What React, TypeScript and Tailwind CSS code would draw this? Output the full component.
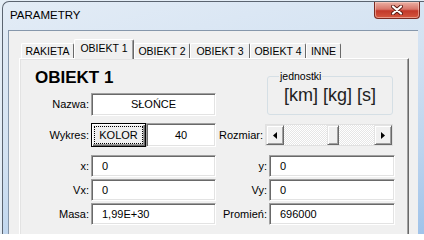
const sunken =
  'bg-white border border-t-[#a0a0a0] border-l-[#a0a0a0] border-r-white border-b-white shadow-[inset_1px_1px_0_#696969,inset_-1px_-1px_0_#e3e3e3]';
const raised =
  'bg-[#f0f0f0] border border-t-[#e3e3e3] border-l-[#e3e3e3] border-r-[#696969] border-b-[#696969] shadow-[inset_1px_1px_0_#ffffff,inset_-1px_-1px_0_#a0a0a0]';

const tabs = [
  { label: 'RAKIETA', w: 'w-[53px]' },
  { label: 'OBIEKT 1', w: 'w-[60px]', active: true },
  { label: 'OBIEKT 2', w: 'w-[56px]' },
  { label: 'OBIEKT 3', w: 'w-[60px]' },
  { label: 'OBIEKT 4', w: 'w-[56px]' },
  { label: 'INNE', w: 'w-[35px]' },
];

function Field({ value, center }: { value: string; center?: boolean }) {
  return (
    <div className={`${sunken} h-full flex items-center ${center ? 'justify-center' : 'pl-[10px]'}`}>
      {value}
    </div>
  );
}

function Row({ label, value, rlabel, rvalue }: { label: string; value: string; rlabel: string; rvalue: string }) {
  return (
    <div className="flex items-center h-[22px] mt-[2px]">
      <span className="w-[69px] text-right">{label}</span>
      <div className="ml-[2px] w-[125px] h-full">
        <Field value={value} />
      </div>
      <span className="ml-[1px] w-[50px] text-right">{rlabel}</span>
      <div className="ml-[2px] w-[126px] h-full">
        <Field value={rvalue} />
      </div>
    </div>
  );
}

function Arrow({ dir }: { dir: 'left' | 'right' }) {
  return (
    <div className={`${raised} w-[18px] h-full flex items-center justify-center`}>
      <svg width="4" height="7" viewBox="0 0 4 7">
        {dir === 'left' ? <polygon points="4,0 4,7 0,3.5" fill="#000" /> : <polygon points="0,0 0,7 4,3.5" fill="#000" />}
      </svg>
    </div>
  );
}

export default function App() {
  return (
    <div className="w-[424px] h-[234px] overflow-hidden bg-[#e4edf6] flex flex-col font-['Liberation_Sans',Arial,sans-serif] text-[11px] text-black">
      <div className="mt-[1px] ml-[2px] flex-1 min-h-0 flex flex-col border-l border-t border-[#5b6470] rounded-tl-[7px] bg-[linear-gradient(165deg,#e3ecf6_0%,#d3e2f2_45%,#bcd4ee_75%,#9fc3ea_100%)]">
        <div className="h-[28px] flex items-start">
          <span className="pl-[7px] pt-[6px] text-[11.5px] leading-[14px]">PARAMETRY</span>
          <div className="ml-auto mr-[4px] w-[46px] h-[17px] rounded-b-[4px] border border-t-0 border-[#7a2a22] bg-[linear-gradient(#ebb0a4_0%,#d8766a_45%,#c2382a_55%,#d4573f_100%)] shadow-[inset_0_0_0_1px_rgba(255,220,210,0.5)] flex items-center justify-center">
            <svg width="12" height="10" viewBox="0 0 12 10">
              <path d="M2 1.5 L10 8.5 M10 1.5 L2 8.5" stroke="#5a1a12" strokeWidth="4" strokeLinecap="round" />
              <path d="M2 1.5 L10 8.5 M10 1.5 L2 8.5" stroke="#ffffff" strokeWidth="2.2" strokeLinecap="round" />
            </svg>
          </div>
        </div>
        <div className="ml-[5px] w-[410px] flex-1 min-h-0 flex flex-col bg-[#f0f0f0] border-l border-t border-[#8697ab]">
          <div className="pt-[8px] pl-[12px] flex items-end">
            {tabs.map((t) =>
              t.active ? (
                <div
                  key={t.label}
                  className={`${t.w} h-[20px] -mb-px relative z-10 bg-[#f0f0f0] border-l border-t border-r border-l-white border-t-white border-r-[#696969] shadow-[inset_-1px_0_0_#a0a0a0] rounded-t-[2px] flex justify-center pt-[2px] text-[10.5px] leading-[13px]`}
                >
                  {t.label}
                </div>
              ) : (
                <div
                  key={t.label}
                  className={`${t.w} h-[15px] border-l border-t border-r border-l-white border-t-white border-r-[#696969] rounded-t-[2px] flex items-center justify-center text-[10.5px] leading-[13px]`}
                >
                  {t.label}
                </div>
              )
            )}
          </div>
          <div className="ml-[10px] w-[390px] flex-1 border border-b-0 border-t-white border-l-white border-r-[#696969] shadow-[inset_-1px_0_0_#a0a0a0,inset_1px_1px_0_#e3e3e3]">
            <div className="flex">
              <div className="w-[197px]">
                <div className="mt-[9px] pl-[15px] h-[20px] text-[17px] leading-[20px] font-bold">OBIEKT 1</div>
                <div className="mt-[5px] flex items-center h-[23px]">
                  <span className="w-[69px] text-right">Nazwa:</span>
                  <div className="ml-[2px] w-[125px] h-full">
                    <Field value="SŁOŃCE" center />
                  </div>
                </div>
              </div>
              <fieldset className="ml-[50px] mt-[11px] w-[126px] h-[45px] border border-[#d5dfe5] rounded-[3px]">
                <legend className="ml-[11px] px-[1px] text-[10.5px] leading-[12px]">jednostki</legend>
                <div className="mt-[3px] text-center text-[18px] leading-[20px] text-[#222]">[km] [kg] [s]</div>
              </fieldset>
            </div>
            <div className="mt-[7px] flex items-center h-[24px]">
              <span className="w-[69px] text-right">Wykres:</span>
              <div className="ml-[2px] w-[125px] h-full flex">
                <div className="w-[55px] h-full flex border border-black bg-[#f0f0f0] shadow-[inset_1px_1px_0_#ffffff,inset_-1px_-1px_0_#696969,inset_-2px_-2px_0_#a0a0a0]">
                  <div className="m-[2px] flex-1 border border-dotted border-black flex items-center justify-center">KOLOR</div>
                </div>
                <div className="flex-1 h-full">
                  <Field value="40" center />
                </div>
              </div>
              <span className="w-[49px] text-right pr-[2px]">Rozmiar:</span>
              <div className="w-[128px] h-[22px] flex border border-[#e0e0e0] bg-[repeating-conic-gradient(#ffffff_0_25%,#e6e6e6_0_50%)] bg-[length:2px_2px]">
                <Arrow dir="left" />
                <div className={`${raised} ml-[43px] w-[12px] h-full`} />
                <div className="flex-1" />
                <Arrow dir="right" />
              </div>
            </div>
            <div className="mt-[8px]">
              <Row label="x:" value="0" rlabel="y:" rvalue="0" />
              <Row label="Vx:" value="0" rlabel="Vy:" rvalue="0" />
              <Row label="Masa:" value="1,99E+30" rlabel="Promień:" rvalue="696000" />
            </div>
          </div>
        </div>
      </div>
    </div>
  );
}
